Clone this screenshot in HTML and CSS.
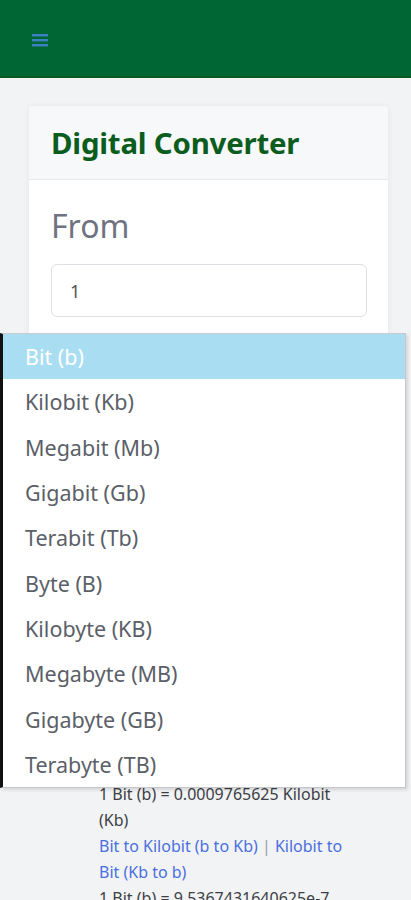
FILE: index.html
```html
<!DOCTYPE html>
<html lang="en">
<head>
<meta charset="utf-8">
<title>Digital Converter</title>
<link rel="stylesheet" href="styles.css">
</head>
<body>
<header class="topbar">
  <button class="menu-btn" aria-label="Menu">
    <svg width="16" height="14" viewBox="0 0 16 14"><rect x="0" y="1" width="16" height="2.4" fill="#3d7fc4"/><rect x="0" y="6" width="16" height="2.4" fill="#3d7fc4"/><rect x="0" y="11" width="16" height="2.4" fill="#3d7fc4"/></svg>
  </button>
</header>
<main class="page">
  <section class="card">
    <div class="card-header"><h1 class="title">Digital Converter</h1></div>
    <div class="card-body">
      <label class="label">From</label>
      <input class="field" type="text" value="1">
      <div class="select-slot"></div>
    </div>
  </section>
  <div class="results">
    <p class="result">1 Bit (b) = 0.0009765625 Kilobit (Kb)</p>
    <p class="links"><a href="#">Bit to Kilobit (b to Kb)</a> | <a href="#">Kilobit to Bit (Kb to b)</a></p>
    <p class="result">1 Bit (b) = 9.5367431640625e-7 Megabit (Mb)</p>
  </div>
</main>
<ul class="dropdown">
  <li class="opt selected">Bit (b)</li>
  <li class="opt">Kilobit (Kb)</li>
  <li class="opt">Megabit (Mb)</li>
  <li class="opt">Gigabit (Gb)</li>
  <li class="opt">Terabit (Tb)</li>
  <li class="opt">Byte (B)</li>
  <li class="opt">Kilobyte (KB)</li>
  <li class="opt">Megabyte (MB)</li>
  <li class="opt">Gigabyte (GB)</li>
  <li class="opt">Terabyte (TB)</li>
</ul>
</body>
</html>
```
FILE: styles.css
```css
* { box-sizing: border-box; }
html, body { margin: 0; padding: 0; }
body {
  background: #f2f3f5;
  font-family: "Noto Sans", "Open Sans", sans-serif;
  color: #212529;
  height: 900px;
  overflow: hidden;
}
.topbar {
  height: 78px;
  background: #006633;
  border-bottom: 2px solid #0d5a1e;
  display: flex;
  align-items: center;
  padding-left: 32px;
}
.menu-btn {
  background: none;
  border: 0;
  padding: 0;
  display: flex;
  margin-top: 3px;
}
.page {
  padding: 28px 23px 0 29px;
}
.card {
  background: #fff;
  border-radius: 4px;
  box-shadow: 0 0 6px rgba(0,0,0,0.06);
  overflow: hidden;
}
.card-header {
  background: #f7f8f9;
  border-bottom: 1px solid #e6e8ea;
  height: 74px;
  display: flex;
  align-items: center;
  padding-left: 22px;
}
.title {
  margin: 0;
  font-size: 29.4px;
  font-weight: 700;
  color: #0b5d1e;
  letter-spacing: -0.2px;
}
.card-body {
  padding: 22px 21px 20px 22px;
}
.label {
  display: block;
  font-size: 32px;
  color: #6f7381;
  line-height: 48px;
  margin-bottom: 14px;
}
.field {
  display: block;
  width: 100%;
  height: 53px;
  border: 1px solid #dcdfe3;
  border-radius: 6px;
  padding: 0 18px;
  font: inherit;
  font-size: 18px;
  color: #555;
}
.select-slot {
  height: 53px;
  margin-top: 18px;
}
.results {
  padding-left: 70px;
  padding-right: 27px;
  margin-top: 373px;
  font-size: 16px;
  line-height: 26px;
  color: #3d3f44;
}
.results p { margin: 0; }
.links a { color: #4a6fe0; text-decoration: none; }
.links { color: #9aa0a8; }
.dropdown {
  position: absolute;
  left: 0;
  top: 333px;
  width: 406px;
  margin: 0;
  padding: 0;
  list-style: none;
  background: #fff;
  border-top: 1px solid #c9cbce;
  border-left: 3px solid #111;
  border-right: 1px solid #c4c6c9;
  border-bottom: 1px solid #c4c6c9;
  box-shadow: 2px 2px 3px rgba(0,0,0,0.12);
}
.opt {
  height: 45.3px;
  display: flex;
  align-items: center;
  padding-left: 22px;
  font-size: 21.5px;
  color: #5b6068;
}
.opt.selected {
  background: #a9def2;
  color: #fff;
}
```
